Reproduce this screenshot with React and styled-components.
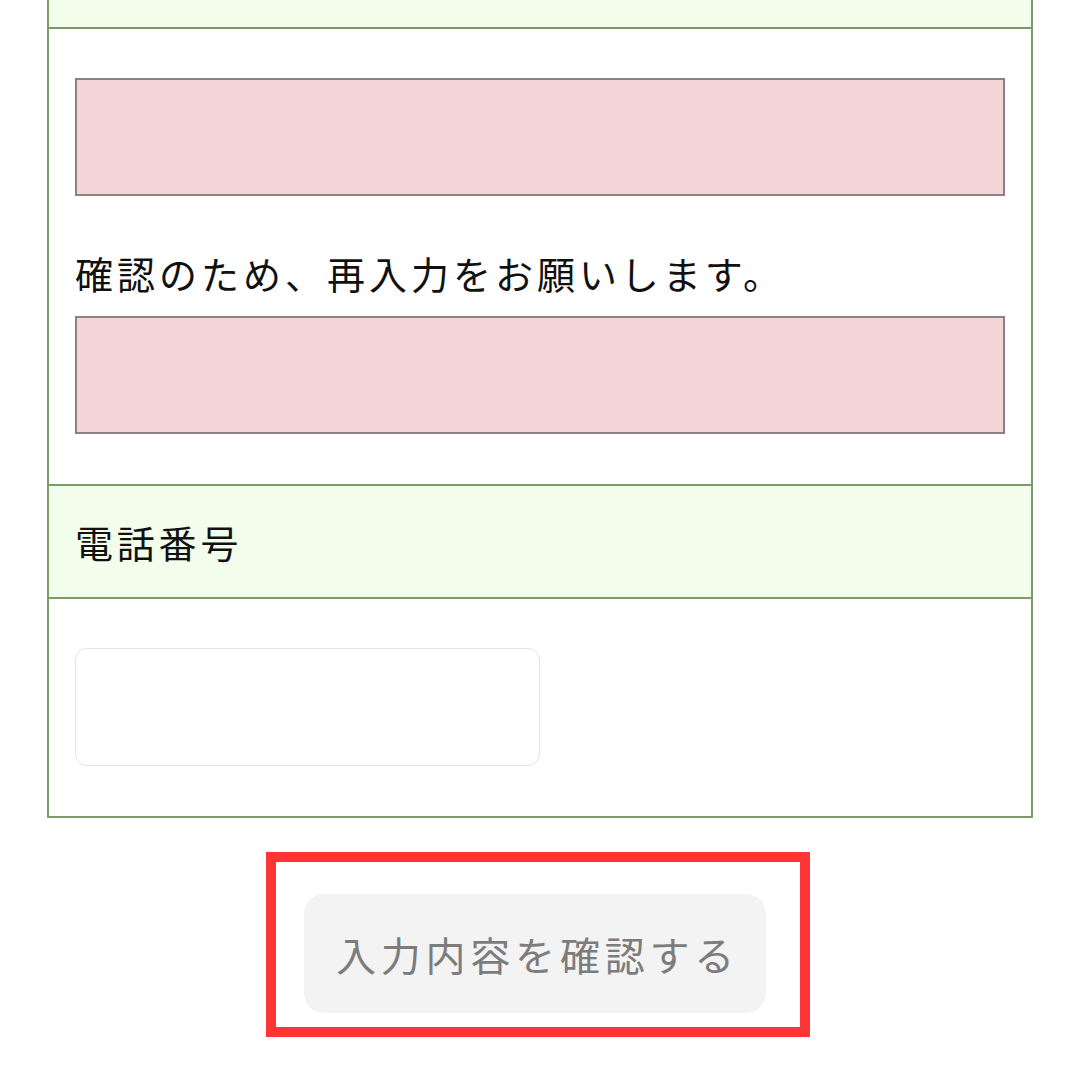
import React from "react"
import styled, { createGlobalStyle } from "styled-components"

const GlobalStyle = createGlobalStyle`
  html, body {
    margin: 0;
    padding: 0;
    background: #ffffff;
  }
  body {
    font-family: "Noto Sans CJK JP", "Noto Sans", sans-serif;
    color: #111111;
  }
`

const Page = styled.div`
  width: 1080px;
  height: 1080px;
  overflow: hidden;
  padding: 0 47px;
  box-sizing: border-box;
`

const FormTable = styled.div`
  border: 2px solid #7b9b68;
  border-top: none;
  display: flex;
  flex-direction: column;
`

const HeadCell = styled.div`
  background: #f3fdec;
  height: ${props => props.height}px;
  border-bottom: 2px solid #7b9b68;
  padding: 0 26px;
  display: flex;
  align-items: center;
  font-size: 38px;
  letter-spacing: 0.1em;
  box-sizing: border-box;
`

const BodyCell = styled.div`
  padding: 49px 26px 50px;
  border-bottom: ${props => (props.last ? "none" : "2px solid #7b9b68")};
  display: flex;
  flex-direction: column;
`

const PinkInput = styled.input`
  height: 118px;
  box-sizing: border-box;
  border: 2px solid #8e8081;
  background: #f4d6d8;
  width: 100%;
  outline: none;
  margin: 0;
`

const Label = styled.div`
  font-size: 38px;
  letter-spacing: 0.105em;
  line-height: 1;
  padding: 58px 0 24px;
`

const PhoneInput = styled.input`
  width: 465px;
  height: 118px;
  box-sizing: border-box;
  border: 1px solid #e4e4e4;
  border-radius: 12px;
  background: #ffffff;
  outline: none;
  margin: 0;
`

const Actions = styled.div`
  display: flex;
  justify-content: center;
  padding-top: 34px;
  padding-right: 5px;
`

const Highlight = styled.div`
  border: 10px solid #ff3434;
  padding: 32px 34px 14px 28px;
`

const SubmitButton = styled.button`
  width: 462px;
  height: 119px;
  border: none;
  border-radius: 20px;
  background: #f3f3f3;
  color: #7c7c7c;
  font-family: "Noto Sans CJK JP", "Noto Sans", sans-serif;
  font-size: 40px;
  letter-spacing: 0.12em;
  padding: 0 0 0 6px;
  cursor: default;
`

export default function App() {
  return (
    <>
      <GlobalStyle />
      <Page>
        <FormTable>
          <HeadCell height={29} />
          <BodyCell>
            <PinkInput type="email" />
            <Label>確認のため、再入力をお願いします。</Label>
            <PinkInput type="email" />
          </BodyCell>
          <HeadCell height={113}>電話番号</HeadCell>
          <BodyCell last>
            <PhoneInput type="tel" />
          </BodyCell>
        </FormTable>
        <Actions>
          <Highlight>
            <SubmitButton disabled>入力内容を確認する</SubmitButton>
          </Highlight>
        </Actions>
      </Page>
    </>
  )
}
